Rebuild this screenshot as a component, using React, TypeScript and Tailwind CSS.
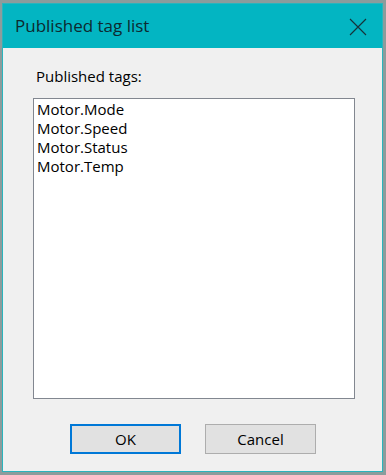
import React from 'react';

const tags = ['Motor.Mode', 'Motor.Speed', 'Motor.Status', 'Motor.Temp'];

export default function App() {
  return (
    <div className="w-[386px] h-[475px] bg-[#8c9c9c] pt-[3px] pl-[2px]">
      <div className="w-[381px] h-[469px] border border-[#2ab4bd] bg-[#f0f0f0] flex flex-col">
        <div className="h-[44px] bg-[#03b5c2] flex items-center justify-between pl-[12px] pr-[15px] shrink-0">
          <span className="text-[17px] text-[#0d2a30] font-['Open_Sans',sans-serif]">
            Published tag list
          </span>
          <svg width="18" height="18" viewBox="0 0 18 18" className="mt-[1px]">
            <path d="M1 1 L17 17 M17 1 L1 17" stroke="#17323a" strokeWidth="1.1" fill="none" />
          </svg>
        </div>
        <div className="flex flex-col pl-[30px] pt-[18px] font-['Open_Sans',sans-serif]">
          <div className="pl-[3px] text-[15px] leading-[20px] text-black">Published tags:</div>
          <div className="mt-[12px] w-[322px] h-[301px] bg-white border border-[#828790] pl-[3px] pt-[1px]">
            {tags.map((t) => (
              <div key={t} className="text-[15px] leading-[19px] text-black">
                {t}
              </div>
            ))}
          </div>
          <div className="flex gap-[24px] mt-[25px] pl-[37px]">
            <button className="w-[111px] h-[30px] bg-[#e1e1e1] border-2 border-[#0078d7] text-[15px] text-black">
              OK
            </button>
            <button className="w-[111px] h-[30px] bg-[#e1e1e1] border border-[#adadad] text-[15px] text-black">
              Cancel
            </button>
          </div>
        </div>
      </div>
    </div>
  );
}
